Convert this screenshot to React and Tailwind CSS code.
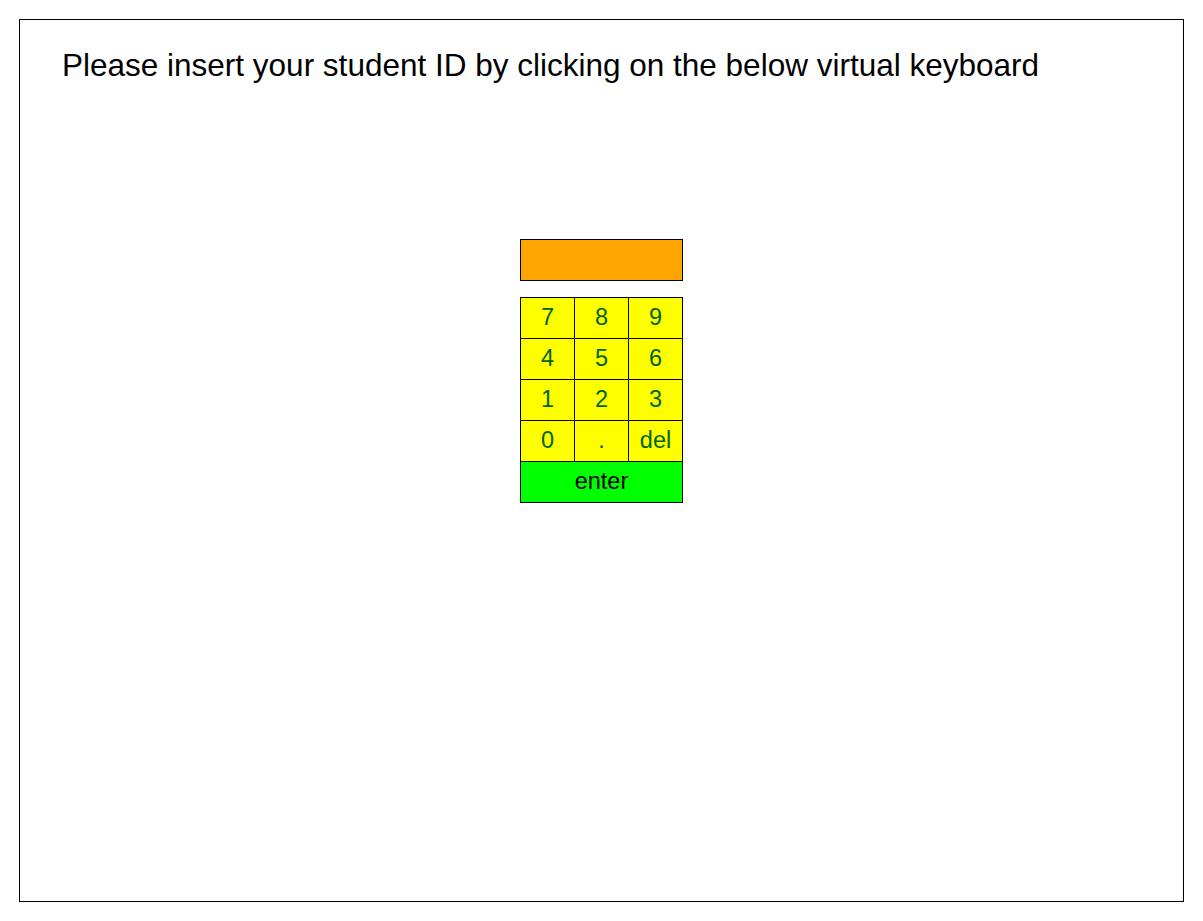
import React from "react";

const rows = [
  ["7", "8", "9"],
  ["4", "5", "6"],
  ["1", "2", "3"],
  ["0", ".", "del"],
];

export default function App() {
  return (
    <div className="w-[1203px] h-[921px] bg-white pt-[19px] pl-[19px] font-['Liberation_Sans',Arial,sans-serif]">
      <div className="w-[1165px] h-[883px] border border-black flex flex-col items-center">
        <h1 className="self-start pl-[42px] pt-[27px] text-[31.5px] leading-[36px] text-black font-normal">
          Please insert your student ID by clicking on the below virtual keyboard
        </h1>
        <div className="mt-[156px] w-[163px] h-[42px] bg-[#ffa500] border border-black" />
        <div className="mt-[16px] w-[163px] border-l border-t border-black">
          {rows.map((r, i) => (
            <div key={i} className="flex">
              {r.map((k) => (
                <div
                  key={k}
                  className="w-[54px] h-[41px] bg-[#ffff00] border-r border-b border-black flex items-center justify-center text-[23.5px] text-[#006400]"
                >
                  {k}
                </div>
              ))}
            </div>
          ))}
          <div className="h-[41px] bg-[#00ff00] border-r border-b border-black flex items-center justify-center text-[23.5px] text-black">
            enter
          </div>
        </div>
      </div>
    </div>
  );
}
